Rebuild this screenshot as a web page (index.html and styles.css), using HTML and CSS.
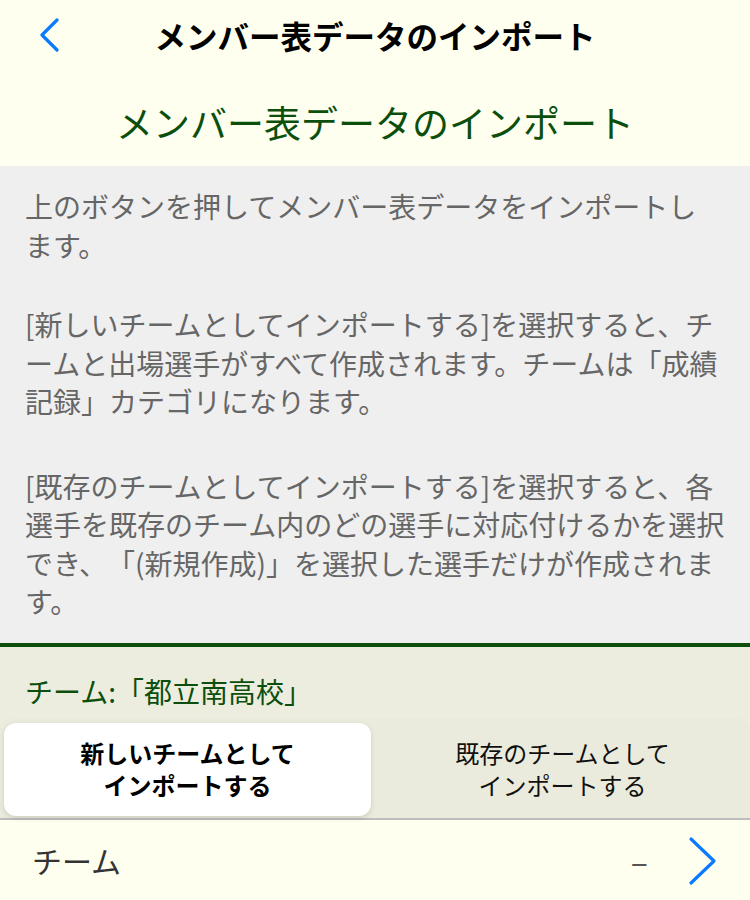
FILE: index.html
```html
<!DOCTYPE html>
<html lang="ja">
<head>
<meta charset="utf-8">
<title>メンバー表データのインポート</title>
<link rel="stylesheet" href="styles.css">
</head>
<body>
<header class="navbar">
  <div class="nav-left">
    <svg class="back" width="20" height="34" viewBox="0 0 20 34"><polyline points="17,2 2,17 17,32" fill="none" stroke="#0A7AFF" stroke-width="3.2" stroke-linecap="round" stroke-linejoin="round"/></svg>
  </div>
  <div class="nav-title">メンバー表データのインポート</div>
  <div class="nav-right"></div>
</header>

<h1 class="page-title">メンバー表データのインポート</h1>

<section class="info">
  <p class="para">上のボタンを押してメンバー表データをインポートし<br>ます。</p>
  <p class="para para-2">[新しいチームとしてインポートする]を選択すると、チ<br>ームと出場選手がすべて作成されます。チームは「成績<br>記録」カテゴリになります。</p>
  <p class="para para-3">[既存のチームとしてインポートする]を選択すると、各<br>選手を既存のチーム内のどの選手に対応付けるかを選択<br>でき、「(新規作成)」を選択した選手だけが作成されま<br>す。</p>
</section>

<section class="team-section">
  <div class="team-label">チーム:「都立南高校」</div>
  <div class="segmented">
    <div class="segment selected">新しいチームとして<br>インポートする</div>
    <div class="segment">既存のチームとして<br>インポートする</div>
  </div>
</section>

<div class="row">
  <span class="row-label">チーム</span>
  <span class="row-value">–</span>
  <svg class="chevron" width="30" height="50" viewBox="0 0 30 50"><polyline points="3,3 26,25 3,47" fill="none" stroke="#0A7AFF" stroke-width="3.2" stroke-linecap="round" stroke-linejoin="round"/></svg>
</div>
</body>
</html>
```

FILE: styles.css
```css
* { box-sizing: border-box; }

html, body {
  margin: 0;
  padding: 0;
}

body {
  background: #FEFFEE;
  font-family: "Noto Sans CJK JP", "Noto Sans", sans-serif;
  width: 750px;
  text-spacing-trim: space-all;
}

.navbar {
  height: 70px;
  display: grid;
  grid-template-columns: 1fr auto 1fr;
  align-items: center;
}

.nav-left {
  padding-left: 40px;
  display: flex;
  align-items: center;
}

.back { display: block; }

.nav-title {
  font-size: 31.5px;
  font-weight: 700;
  color: #000;
  line-height: 70px;
}

.page-title {
  margin: 0;
  padding-top: 8px;
  height: 96px;
  line-height: 88px;
  font-size: 37px;
  font-weight: 400;
  color: #0C4F0C;
  text-align: center;
}

.info {
  background: #EFEFEF;
  padding: 21px 25px 22px;
  color: #666;
  font-size: 28px;
  line-height: 38.5px;
  white-space: nowrap;
  border-bottom: 4px solid #0C4F0C;
}

.para { margin: 0; }
.para-2 { margin-top: 41px; }
.para-3 { margin-top: 46px; }

.team-section {
  background: #EDEDDF;
}

.team-label {
  padding: 17px 0 0 25px;
  height: 71px;
  line-height: 54px;
  font-size: 28px;
  color: #0C4F0C;
}

.segmented {
  background: #EBEBDD;
  border-radius: 14px 14px 0 0;
  padding: 5px 4px 2px;
  border-bottom: 2px solid #BDBDBD;
  display: grid;
  grid-template-columns: 1fr 1fr;
  gap: 8px;
}

.segment {
  height: 93px;
  display: flex;
  align-items: center;
  justify-content: center;
  text-align: center;
  font-size: 24px;
  line-height: 32px;
  color: #111;
}

.segment.selected {
  background: #FFFFFF;
  border-radius: 12px;
  font-weight: 700;
  color: #000;
  box-shadow: 0 2px 5px rgba(0, 0, 0, 0.13);
}

.row {
  height: 81px;
  display: flex;
  align-items: center;
  padding: 0 32px 0 32px;
}

.row-label {
  font-size: 30px;
  color: #333;
  flex: 1;
}

.row-value {
  font-size: 32px;
  color: #555;
  margin-right: 40px;
}

.chevron {
  display: block;
  margin-top: 2px;
}
```
